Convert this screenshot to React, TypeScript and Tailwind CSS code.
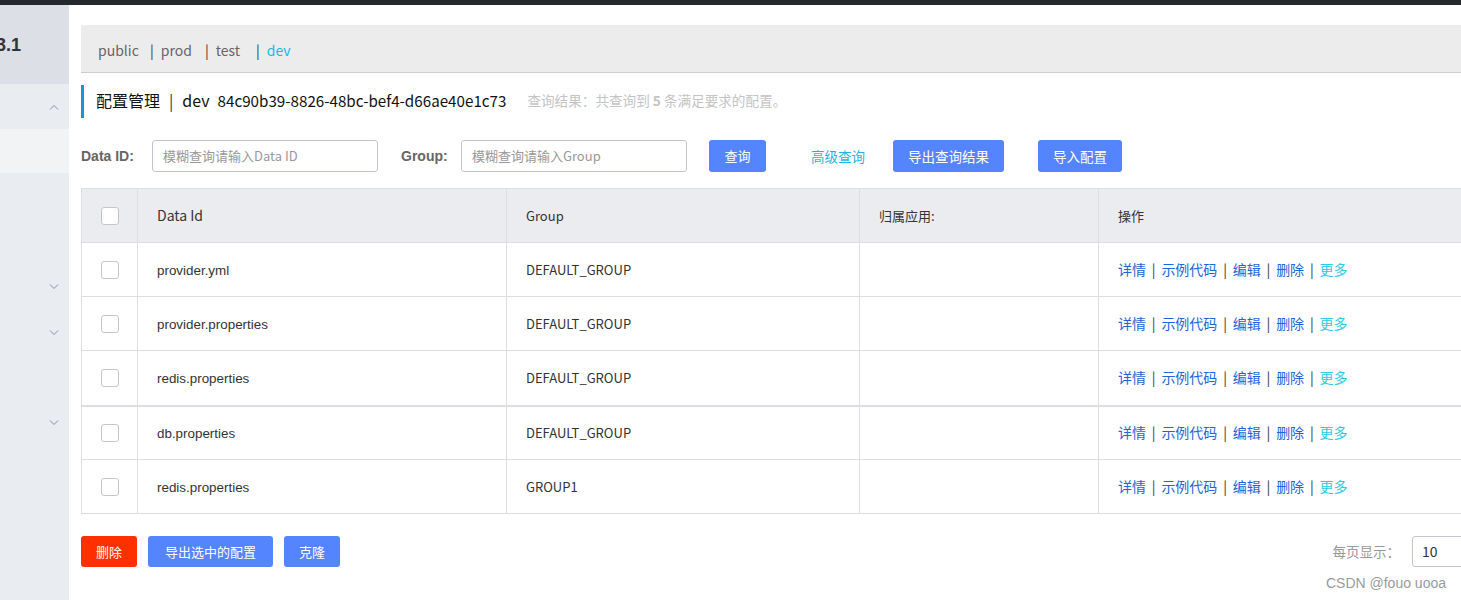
import React from 'react';

const rows = [
  { id: 'provider.yml', group: 'DEFAULT_GROUP' },
  { id: 'provider.properties', group: 'DEFAULT_GROUP' },
  { id: 'redis.properties', group: 'DEFAULT_GROUP' },
  { id: 'db.properties', group: 'DEFAULT_GROUP' },
  { id: 'redis.properties', group: 'GROUP1' },
];

function Chevron({ up = false }: { up?: boolean }) {
  return (
    <svg width="10" height="6" viewBox="0 0 10 6" fill="none" stroke="#8a8f99" strokeWidth="1">
      {up ? <path d="M1 5.5 L5 1.5 L9 5.5" /> : <path d="M1 0.5 L5 4.5 L9 0.5" />}
    </svg>
  );
}

function Checkbox() {
  return <div className="w-[18px] h-[18px] rounded-[3px] border border-[#c4c6cf] bg-white" />;
}

function Sep() {
  return <span className="text-[#333] mx-[5.8px]">|</span>;
}

export default function App() {
  return (
    <div className="w-[1461px] h-[600px] overflow-hidden flex flex-col bg-white font-['Noto_Sans_CJK_SC','Microsoft_YaHei',sans-serif] text-[#333]">
      <div className="h-[5px] bg-[#25282d] shrink-0" />
      <div className="flex flex-1 min-h-0">
        {/* sidebar */}
        <aside className="w-[69px] shrink-0 bg-[#e9ecf0] flex flex-col overflow-hidden">
          <div className="h-[79px] bg-[#dcdfe5] flex items-center pt-[1px]">
            <span className="ml-[-4px] text-[18px] font-bold text-[#333] font-['Liberation_Sans',sans-serif]">3.1</span>
          </div>
          <div className="h-[45px] flex items-center justify-end pr-[10px]">
            <Chevron up />
          </div>
          <div className="h-[44px] bg-[#f2f3f5]" />
          <div className="h-[120px] flex items-end justify-end pr-[10px] pb-[3px]">
            <Chevron />
          </div>
          <div className="h-[46px] flex items-end justify-end pr-[10px] pb-[3px]">
            <Chevron />
          </div>
          <div className="h-[90px] flex items-end justify-end pr-[10px] pb-[3px]">
            <Chevron />
          </div>
        </aside>

        {/* main */}
        <main className="flex-1 min-w-0 overflow-hidden pl-[12px] pt-[20px]">
          <div className="w-[1420px] h-[48px] bg-[#ececec] border-b border-[#cccccc] flex items-center pl-[17px] pt-[4px] text-[14px] text-[#666]">
            <span className="w-[52px]">public</span>
            <span className="w-[55px]"><span className="text-[#333]">|</span><span className="ml-[7px]">prod</span></span>
            <span className="w-[51px]"><span className="text-[#333]">|</span><span className="ml-[7px]">test</span></span>
            <span><span className="text-[#333]">|</span><span className="ml-[7px] text-[#1fb5e2]">dev</span></span>
          </div>

          <div className="mt-[12px] h-[33px] border-l-[3px] border-[#1d93d1] flex items-center pl-[12px] pb-[3px]">
            <span className="text-[16px] text-[#111]">配置管理</span>
            <span className="text-[16px] text-[#333] mx-[9px]">|</span>
            <span className="text-[16px] text-[#111]">dev</span>
            <span className="text-[15.2px] text-[#111] ml-[8px]">84c90b39-8826-48bc-bef4-d66ae40e1c73</span>
            <span className="text-[13.6px] text-[#c4c4c4] ml-[21px]">
              查询结果：共查询到 <b className="font-bold">5</b> 条满足要求的配置。
            </span>
          </div>

          <div className="mt-[22px] h-[32px] flex items-center text-[14px]">
            <span className="font-bold text-[#666] font-['Liberation_Sans',sans-serif] w-[71px]">Data ID:</span>
            <div className="w-[226px] h-[32px] border border-[#c4c6cf] rounded-[3px] flex items-center pl-[10px] text-[13px] text-[#999]">
              模糊查询请输入Data ID
            </div>
            <span className="ml-[23px] font-bold text-[#666] font-['Liberation_Sans',sans-serif] w-[60px]">Group:</span>
            <div className="w-[226px] h-[32px] border border-[#c4c6cf] rounded-[3px] flex items-center pl-[10px] text-[13px] text-[#999]">
              模糊查询请输入Group
            </div>
            <button className="ml-[22px] w-[57px] h-[32px] rounded-[3px] bg-[#5584ff] text-white text-[13px]">查询</button>
            <span className="ml-[45px] w-[55px] text-[13.5px] text-[#1fb5e2]">高级查询</span>
            <button className="ml-[27px] w-[111px] h-[32px] rounded-[3px] bg-[#5584ff] text-white text-[13.5px]">导出查询结果</button>
            <button className="ml-[34px] w-[84px] h-[32px] rounded-[3px] bg-[#5584ff] text-white text-[13.5px]">导入配置</button>
          </div>

          <table className="mt-[16px] w-[1400px] table-fixed border-collapse text-[14px]">
            <colgroup>
              <col className="w-[56px]" />
              <col className="w-[369px]" />
              <col className="w-[353px]" />
              <col className="w-[239px]" />
              <col className="w-[383px]" />
            </colgroup>
            <thead>
              <tr className="h-[54px] bg-[#ebecf0] text-left">
                <th className="border border-[#dcdee3] font-normal">
                  <div className="flex justify-center"><Checkbox /></div>
                </th>
                <th className="border border-[#dcdee3] font-normal pl-[19px]">Data Id</th>
                <th className="border border-[#dcdee3] font-normal pl-[19px] text-[13px]">Group</th>
                <th className="border border-[#dcdee3] font-normal pl-[19px] text-[13px]">归属应用:</th>
                <th className="border border-[#dcdee3] font-normal pl-[19px] text-[13px]">操作</th>
              </tr>
            </thead>
            <tbody>
              {rows.map((r, i) => (
                <tr key={i} className={i === 2 ? 'h-[55px] border-b-2 border-[#dcdee3]' : 'h-[54px]'}>
                  <td className="border border-[#dcdee3]">
                    <div className="flex justify-center"><Checkbox /></div>
                  </td>
                  <td className="border border-[#dcdee3] pl-[19px] pt-[3px] text-[13.4px] text-[#333] font-['Liberation_Sans',sans-serif]">{r.id}</td>
                  <td className="border border-[#dcdee3] pl-[19px] text-[13px]">{r.group}</td>
                  <td className="border border-[#dcdee3]" />
                  <td className="border border-[#dcdee3] pl-[19px] text-[14px]">
                    <span className="text-[#1f64d8]">详情</span>
                    <Sep />
                    <span className="text-[#1f64d8]">示例代码</span>
                    <Sep />
                    <span className="text-[#1f64d8]">编辑</span>
                    <Sep />
                    <span className="text-[#1f64d8]">删除</span>
                    <Sep />
                    <span className="text-[#33c8e4]">更多</span>
                  </td>
                </tr>
              ))}
            </tbody>
          </table>

          <div className="mt-[22px] w-[1400px] flex items-center">
            <button className="w-[56px] h-[31px] rounded-[3px] bg-[#ff3000] text-white text-[13px]">删除</button>
            <button className="ml-[11px] w-[125px] h-[31px] rounded-[3px] bg-[#5584ff] text-white text-[13px]">导出选中的配置</button>
            <button className="ml-[11px] w-[56px] h-[31px] rounded-[3px] bg-[#5584ff] text-white text-[13px]">克隆</button>
            <div className="ml-auto flex items-center">
              <span className="text-[13.5px] text-[#999]">每页显示：</span>
              <div className="ml-[12px] w-[69px] h-[31px] border border-[#c4c6cf] rounded-[3px] flex items-center pl-[9px] text-[14px] text-[#333]">10</div>
            </div>
          </div>
          <div className="w-[1365px] flex justify-end mt-[6px]">
            <span className="text-[14px] text-[#9a9a9a] font-['Liberation_Sans',sans-serif]">CSDN @fouo uooa</span>
          </div>
        </main>
      </div>
    </div>
  );
}
